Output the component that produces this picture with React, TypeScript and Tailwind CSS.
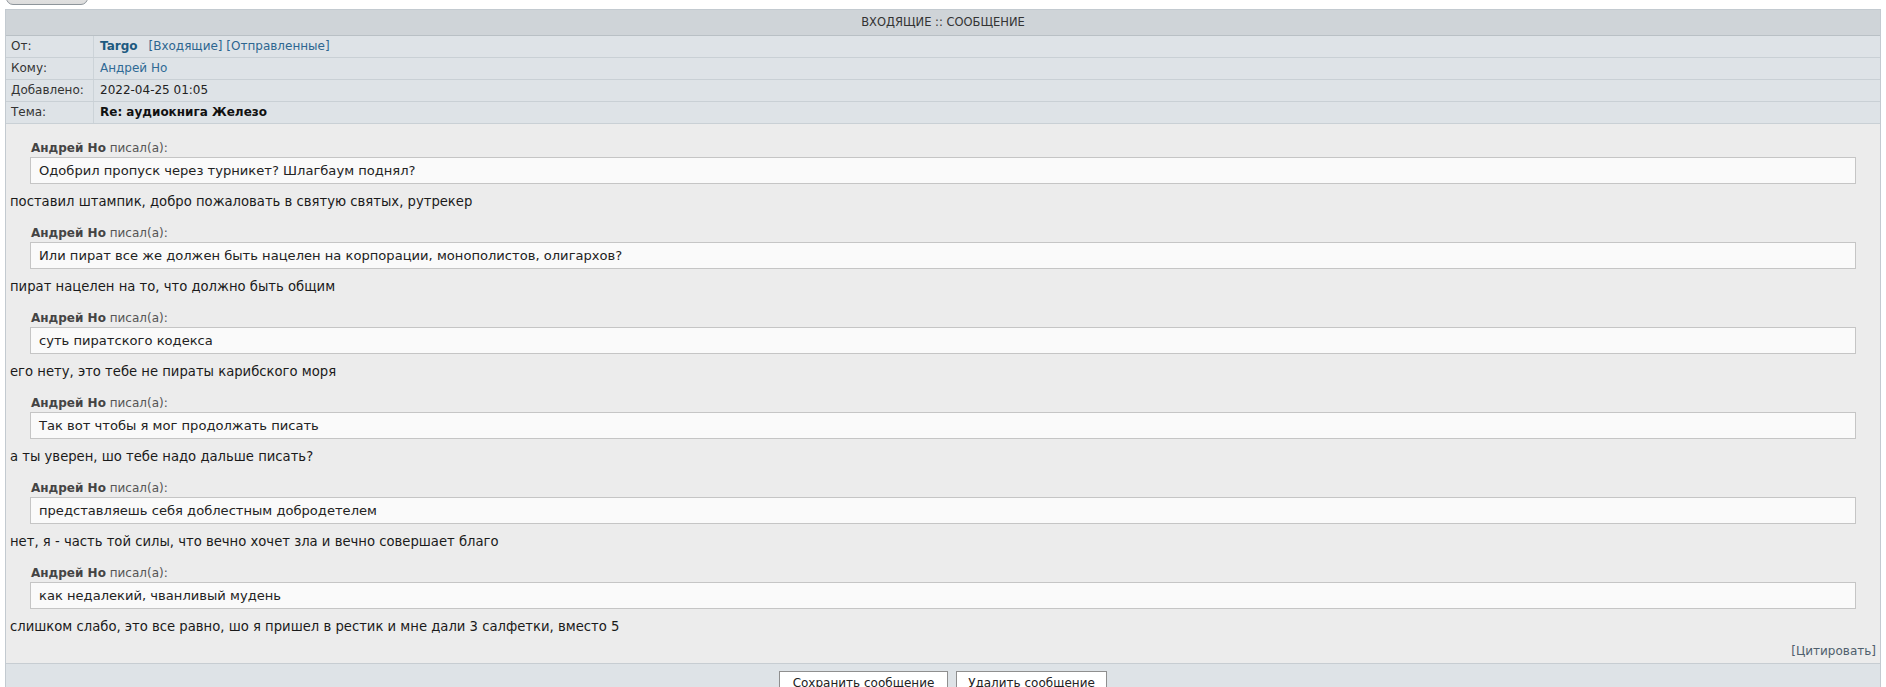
const quotes = [
  {
    quote: 'Одобрил пропуск через турникет? Шлагбаум поднял?',
    reply: 'поставил штампик, добро пожаловать в святую святых, рутрекер',
  },
  {
    quote: 'Или пират все же должен быть нацелен на корпорации, монополистов, олигархов?',
    reply: 'пират нацелен на то, что должно быть общим',
  },
  {
    quote: 'суть пиратского кодекса',
    reply: 'его нету, это тебе не пираты карибского моря',
  },
  {
    quote: 'Так вот чтобы я мог продолжать писать',
    reply: 'а ты уверен, шо тебе надо дальше писать?',
  },
  {
    quote: 'представляешь себя доблестным добродетелем',
    reply: 'нет, я - часть той силы, что вечно хочет зла и вечно совершает благо',
  },
  {
    quote: 'как недалекий, чванливый мудень',
    reply: 'слишком слабо, это все равно, шо я пришел в рестик и мне дали 3 салфетки, вместо 5',
  },
];

function InfoRow({ label, children }: { label: string; children: React.ReactNode }) {
  return (
    <div className="flex h-[22px] border-b border-[#c9d0d5] bg-[#dee3e7] text-[12px] leading-[21px]">
      <div className="w-[88px] shrink-0 border-r border-[#ccd3d8] pl-[5px] text-[#333]">{label}</div>
      <div className="flex-1 pl-[6px] text-[#222]">{children}</div>
    </div>
  );
}

export default function App() {
  return (
    <div className="min-h-[687px] bg-white px-[5px] font-['DejaVu_Sans',Verdana,sans-serif] text-[#222]">
      {/* partially visible button above the table */}
      <div className="h-[9px] overflow-hidden">
        <div className="-mt-[20px] ml-[1px] h-[25px] w-[82px] rounded-[7px] border border-[#8e959b] bg-gradient-to-b from-[#f4f4f4] to-[#dcdcdc]" />
      </div>

      <div className="border border-[#c3cad0]">
        <div className="h-[26px] border-b border-[#b9c0c5] bg-[#cfd4d8] text-center text-[11.5px] leading-[25px] text-[#333]">
          ВХОДЯЩИЕ :: СООБЩЕНИЕ
        </div>
        <InfoRow label="От:">
          <span className="font-bold text-[#1d5a80]">Targo</span>
          <span className="ml-[11px] text-[#2d6690]">[Входящие] [Отправленные]</span>
        </InfoRow>
        <InfoRow label="Кому:">
          <span className="text-[#2f6a95]">Андрей Но</span>
        </InfoRow>
        <InfoRow label="Добавлено:">2022-04-25 01:05</InfoRow>
        <InfoRow label="Тема:">
          <span className="font-bold text-[#111]">Re: аудиокнига Железо</span>
        </InfoRow>

        <div className="bg-[#ececec] px-[4px] pt-[16px] pb-[4px]">
          {quotes.map((q, i) => (
            <div key={i} className="mb-[14px]">
              <div className="mx-[20px]">
                <div className="h-[17px] pl-[1px] text-[12px] leading-[16px] text-[#555]">
                  <span className="font-bold text-[#444]">Андрей Но</span> писал(а):
                </div>
                <div className="h-[27px] border border-[#c5c5c5] bg-[#fafafa] pl-[8px] text-[13.1px] leading-[25px] text-[#222]">
                  {q.quote}
                </div>
              </div>
              <div className="mt-[9px] h-[18px] text-[13.2px] leading-[18px] text-[#1a1a1a]">{q.reply}</div>
            </div>
          ))}
          <div className="-mt-[7px] text-right text-[12px] leading-[16px] text-[#4f5f6d]">[Цитировать]</div>
        </div>

        <div className="flex h-[30px] justify-center gap-[8px] border-t border-[#c7cdd2] bg-[#dee3e7] pt-[7px]">
          <button className="h-[24px] w-[169px] border border-[#8f8f8f] bg-white text-[12px] leading-[20px] text-[#222]">
            Сохранить сообщение
          </button>
          <button className="h-[24px] w-[151px] border border-[#8f8f8f] bg-white text-[12px] leading-[20px] text-[#222]">
            Удалить сообщение
          </button>
        </div>
      </div>
    </div>
  );
}
